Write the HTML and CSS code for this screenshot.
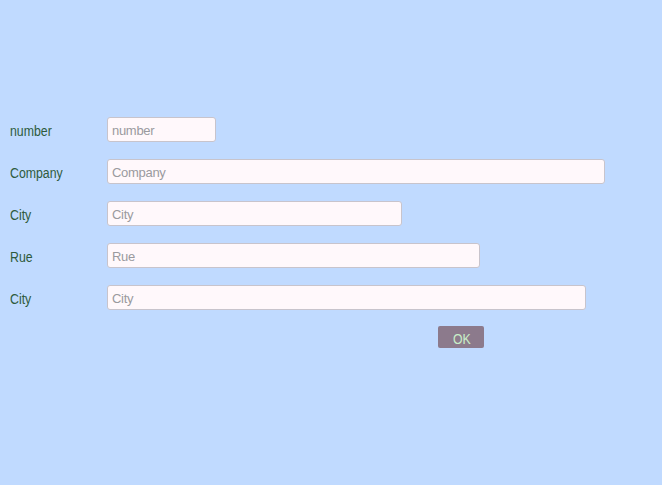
FILE: index.html
```html
<!DOCTYPE html>
<html>
<head>
<meta charset="utf-8">
<link rel="stylesheet" href="styles.css">
</head>
<body>
<form class="form">
  <div class="row"><label class="label"><span class="narrow">number</span></label><input class="field w-number" placeholder="number"></div>
  <div class="row"><label class="label"><span class="narrow">Company</span></label><input class="field w-company" placeholder="Company"></div>
  <div class="row"><label class="label"><span class="narrow">City</span></label><input class="field w-city1" placeholder="City"></div>
  <div class="row"><label class="label"><span class="narrow">Rue</span></label><input class="field w-rue" placeholder="Rue"></div>
  <div class="row"><label class="label"><span class="narrow">City</span></label><input class="field w-city2" placeholder="City"></div>
  <div class="actions"><button type="button" class="ok"><span class="narrow">OK</span></button></div>
</form>
</body>
</html>
```
FILE: styles.css
```css
html, body {
  margin: 0;
  padding: 0;
  background: #c0daff;
  height: 100%;
}
body {
  font-family: "Liberation Sans", Arial, sans-serif;
  font-size: 14px;
}
.form {
  padding: 117px 0 0 10px;
  display: flex;
  flex-direction: column;
  gap: 17px;
}
.row {
  display: flex;
  align-items: center;
  height: 25px;
}
.narrow {
  display: inline-block;
  transform: scaleX(0.88);
  transform-origin: left center;
}
.label {
  width: 97px;
  color: #2e5a3c;
  font-size: 14px;
  padding-top: 2px;
}
.field {
  box-sizing: border-box;
  height: 25px;
  border: 1px solid #c8c4cc;
  border-radius: 3px;
  background: #fff8fb;
  padding: 2px 4px 0;
  font-family: inherit;
  font-size: 13px;
  letter-spacing: -0.3px;
  color: #333;
  outline: none;
}
.field::placeholder { color: #9a9a9e; }
.w-number { width: 109px; }
.w-company { width: 498px; }
.w-city1 { width: 295px; }
.w-rue { width: 373px; }
.w-city2 { width: 479px; }
.actions {
  display: flex;
  padding-left: 428px;
  margin-top: -1px;
}
.ok {
  width: 46px;
  height: 22px;
  border: none;
  border-radius: 2px;
  background: #8c7a8c;
  color: #c8efc8;
  font-family: inherit;
  font-size: 14px;
  padding: 3px 0 0 15px;
  text-align: left;
}
```
